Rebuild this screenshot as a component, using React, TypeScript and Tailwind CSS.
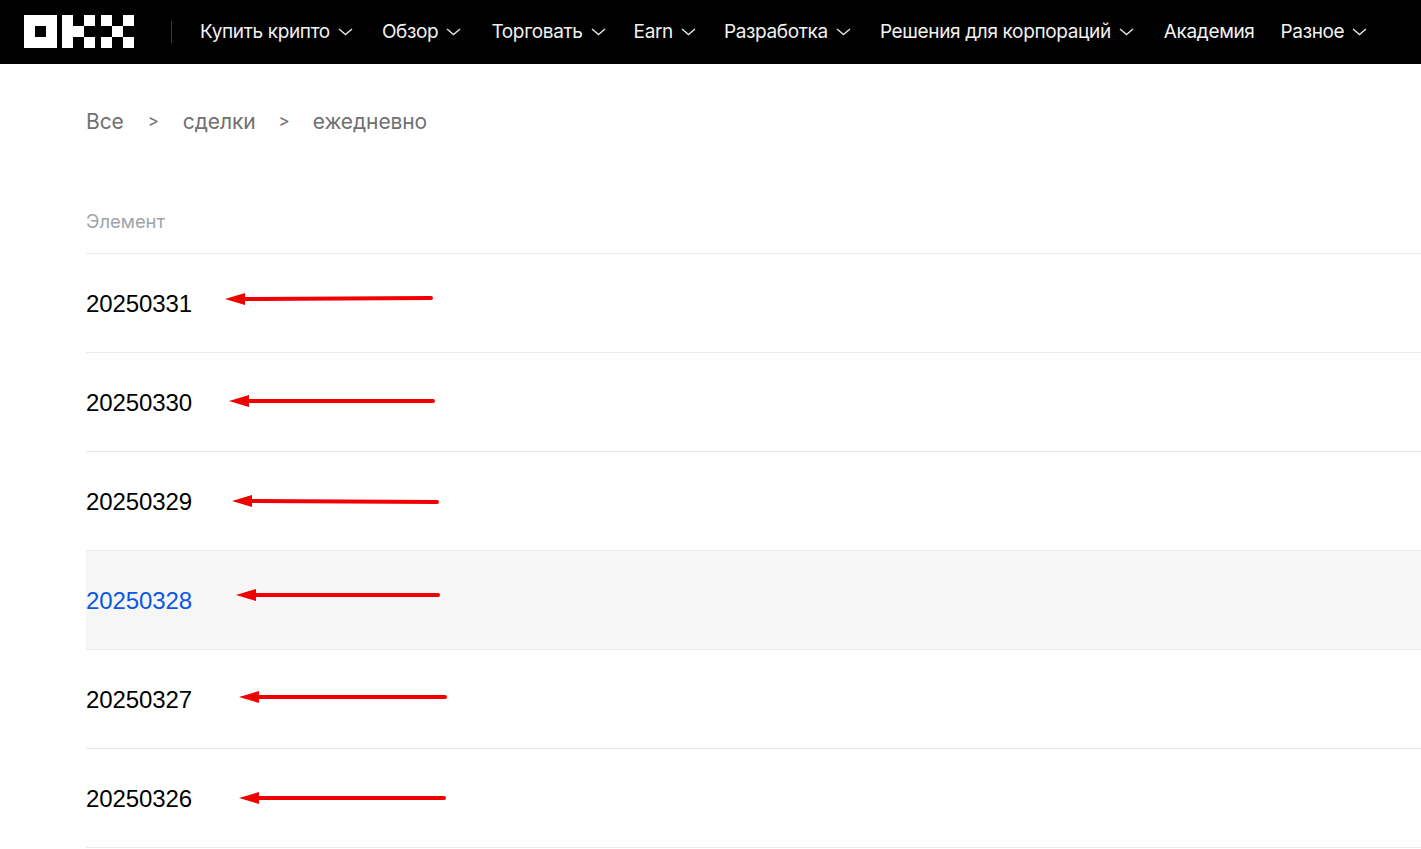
import React from 'react';

const navItems = [
  { label: 'Купить крипто', left: 'ml-[28px]', arrow: true },
  { label: 'Обзор', left: 'ml-[29px]', arrow: true },
  { label: 'Торговать', left: 'ml-[30px]', arrow: true },
  { label: 'Earn', left: 'ml-[28px]', arrow: true },
  { label: 'Разработка', left: 'ml-[28px]', arrow: true },
  { label: 'Решения для корпораций', left: 'ml-[29px]', arrow: true },
  { label: 'Академия', left: 'ml-[30px]', arrow: false },
  { label: 'Разное', left: 'ml-[26px]', arrow: true },
];

// each arrow is hand drawn in the picture, so it keeps its own offset
const rows = [
  { id: '20250331', top: 'top-[36px]', left: 'left-[139px]', y1: 8, y2: 9, width: 208 },
  { id: '20250330', top: 'top-[39px]', left: 'left-[143px]', y1: 9, y2: 9, width: 206 },
  { id: '20250329', top: 'top-[40px]', left: 'left-[146px]', y1: 10, y2: 9, width: 207 },
  { id: '20250328', top: 'top-[35px]', left: 'left-[150px]', y1: 9, y2: 9, width: 204, active: true },
  { id: '20250327', top: 'top-[38px]', left: 'left-[153px]', y1: 9, y2: 9, width: 208 },
  { id: '20250326', top: 'top-[40px]', left: 'left-[153px]', y1: 9, y2: 9, width: 207 },
];

const Logo = () => (
  <svg width="110" height="33" viewBox="0 0 110 33" fill="#fff" className="-mt-[1px]">
    <path fillRule="evenodd" d="M0 0h33v33H0z M11 11v11h11V11z" />
    <rect x="38" y="0" width="11" height="33" />
    <rect x="49" y="11" width="11" height="11" />
    <rect x="60" y="0" width="11" height="11" />
    <rect x="60" y="22" width="11" height="11" />
    <rect x="77" y="0" width="11" height="11" />
    <rect x="77" y="22" width="11" height="11" />
    <rect x="88" y="11" width="11" height="11" />
    <rect x="99" y="0" width="11" height="11" />
    <rect x="99" y="22" width="11" height="11" />
  </svg>
);

const Chevron = () => (
  <svg width="15" height="8" viewBox="0 0 15 8" fill="none" stroke="#e5e5e5" strokeWidth="1.4" className="ml-[8px] -mt-[1px]">
    <path d="M1 1l6.5 5.5L14 1" />
  </svg>
);

const Arrow = ({ y1, y2, width }: { y1: number; y2: number; width: number }) => (
  <svg width={width} height="18" viewBox={`0 0 ${width} 18`}>
    <line x1="16" y1={y2} x2={width - 2} y2={y1} stroke="#f00000" strokeWidth="4" strokeLinecap="round" />
    <path d={`M0 ${y2}L20 ${y2 - 6}V${y2 + 6}z`} fill="#f00000" />
  </svg>
);

const App: React.FC = () => {
  return (
    <div className="min-h-[849px] bg-white font-['Liberation_Sans',sans-serif] overflow-hidden">
      <header className="h-[64px] bg-black flex items-center pl-[24px] whitespace-nowrap">
        <Logo />
        <div className="w-px h-[22px] bg-[#3a3a3a] ml-[37px]" />
        <nav className="flex items-center pt-[1px]">
          {navItems.map((item) => (
            <a key={item.label} href="#" className={`${item.left} flex items-center text-[#f2f2f2] text-[19px] font-['Inter',sans-serif] tracking-[-0.35px]`}>
              {item.label}
              {item.arrow && <Chevron />}
            </a>
          ))}
        </nav>
      </header>

      <main className="pl-[86px]">
        <div className="flex items-center h-[26px] mt-[45px] text-[21px] text-[#707070] font-['Inter',sans-serif] tracking-[-0.1px]">
          <span>Все</span>
          <span className="mx-[24px] text-[17px]">&gt;</span>
          <span>сделки</span>
          <span className="ml-[23px] mr-[23px] text-[17px]">&gt;</span>
          <span>ежедневно</span>
        </div>

        <div className="mt-[73px] h-[46px] text-[18.4px] text-[#a0a4aa] font-['Inter',sans-serif] border-b border-[#e9e9e9]">
          Элемент
        </div>

        {rows.map((row) => (
          <div
            key={row.id}
            className={`relative h-[99px] flex items-center border-b border-[#e9e9e9] text-[24px] pt-[1px] tracking-[-0.1px] ${
              row.active ? 'bg-[#f6f6f6] text-[#0b57e3]' : 'text-black'
            }`}
          >
            {row.id}
            <div className={`absolute ${row.top} ${row.left}`}>
              <Arrow y1={row.y1} y2={row.y2} width={row.width} />
            </div>
          </div>
        ))}
      </main>
    </div>
  );
};

export default App;
